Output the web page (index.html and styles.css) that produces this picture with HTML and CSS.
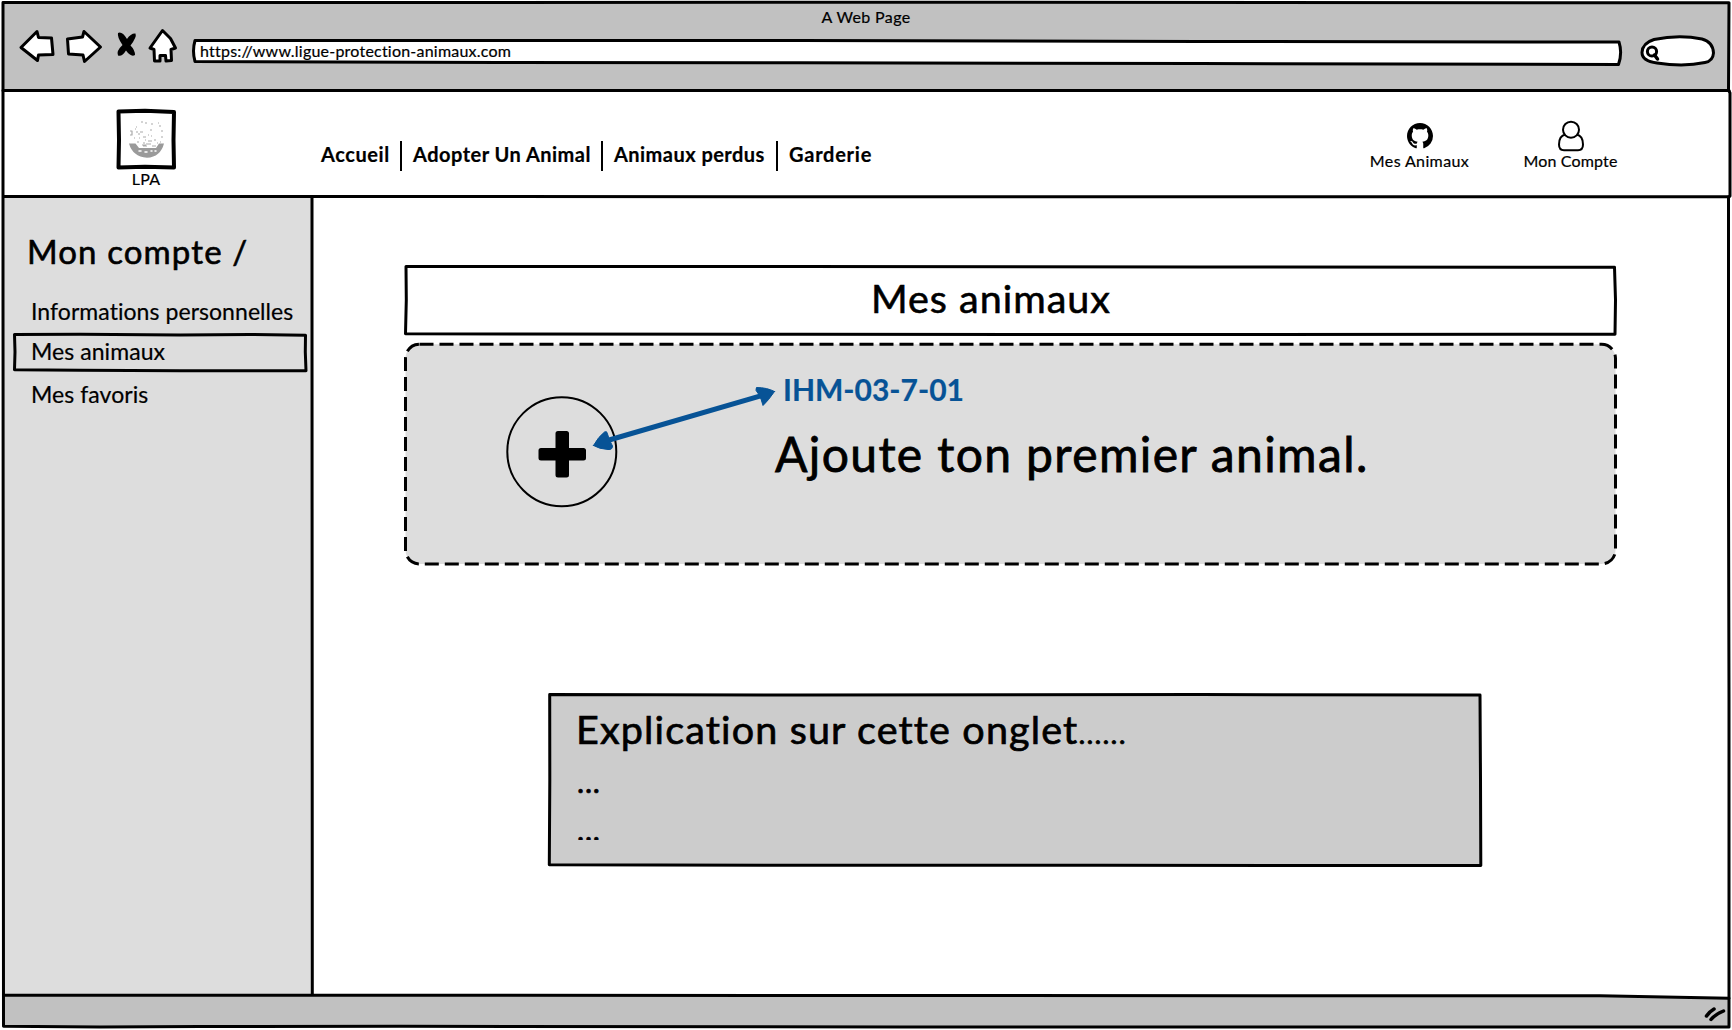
FILE: index.html
```html
<!DOCTYPE html>
<html lang="fr">
<head>
<meta charset="utf-8">
<title>Mes animaux - LPA</title>
<link rel="stylesheet" href="styles.css">
</head>
<body>
<div class="window">

  <div class="chrome">
    <div class="chrome-title">A Web Page</div>
    <div class="controls">
      <svg class="back" width="40" height="40" viewBox="18 27 40 40"><path d="M21 47.500 L37 31.500 L38.500 37.500 L51.500 38 L53 54.500 L38.500 55 L37.500 60.500 Z"/></svg>
      <svg class="forward" width="40" height="40" viewBox="64 27 40 40"><path d="M67.500 39 L82.500 37 L84 31.500 L100.500 47 L84.500 61.500 L83 55 L68.500 54 Z"/></svg>
      <svg class="stop" width="24" height="40" viewBox="115 27 24 40"><path class="solid" d="M119 33 Q123 31 128 39 Q132 33 136.500 33.500 Q138 37 131.500 45.500 Q136 50 136 55 Q132 57.500 127 50.500 Q123 57 119 55.500 Q117 51 123.500 45 Q118 37 119 33 Z"/></svg>
      <svg class="home" width="32" height="40" viewBox="147 27 32 40"><path d="M162.500 30.500 L150 48 L154 49.500 L154.500 61 L160 61 L160 55.500 L165.500 55.500 L166 61 L171.500 60.500 L171 49.500 L175.500 48 L170.500 38.500 Z"/></svg>
      <div class="address">
        <svg class="sketch" width="1432" height="30" viewBox="190 37 1432 30"><path class="paper" d="M196 40.500 L800 40.500 L1200 41.500 L1620 42 Q1623.500 53 1619.500 64.500 L1200 63.500 L800 62.800 L500 62.500 L196 61.500 Q193 51 196 40.500 Z"/></svg>
        <span>https://www.ligue-protection-animaux.com</span>
      </div>
      <svg class="search" width="80" height="40" viewBox="1639 27 80 40"><path d="M1655 39.500 Q1680 34.500 1703 39 Q1714 42 1714.500 53 Q1714 61 1706 62.500 Q1685 67 1658 63 Q1643 61 1643 52.500 Q1643.500 43 1655 39.500 Z"/><circle cx="1653" cy="51.500" r="4.600"/><path d="M1655.500 55 L1658.500 59" stroke-width="3.500"/></svg>
    </div>
  </div>

  <header class="site-header">
    <a class="brand">
      <svg width="64" height="64" viewBox="114 107 64 64">
        <path class="paper thick" d="M118.500 111.500 L145 110.800 L174 112 L173.500 140 L174 167.500 L145 166.800 L118.500 167.500 L119 140 Z"/>
        <path class="bowl" d="M129 143.500 L135.500 143.500 L139 148 L156 148 L159 143.500 L164 143.500 Q160.500 157 147 157.800 Q132.500 156.500 129 143.500 Z"/>
        <path class="specks" d="M141 122h2m2 1h2m4 1h2m5-1h1M136 127h1m-2 2h1m23-3h2M130 131h2v4h-2m6-3h2m2 0h3m-5 2h2m10-4h2m9 1h2M139 138h1m3-1h3m5-1h1m9 1h2m-3 5h1M134 138h1m2 4h2m6-2h1m-3 3h2m3-2h4m-6 3h5m-8 2h4M148 135h1m5 5h2m1 3h1M142 145h4m6 1h4"/>
        <path class="gaps" d="M139 151h2M145 152h2M151 151h1M155 151h1"/>
      </svg>
      <span>LPA</span>
    </a>
    <nav class="site-nav">
      <a class="n1">Accueil</a><a class="n2">Adopter Un Animal</a><a class="n3">Animaux perdus</a><a class="n4">Garderie</a>
    </nav>
    <div class="shortcuts">
      <a class="shortcut pets">
        <svg width="26" height="26" viewBox="0 0 16 16"><path class="solid" d="M8 0C3.580 0 0 3.580 0 8c0 3.540 2.290 6.530 5.470 7.590.4.070.55-.17.55-.38 0-.19-.01-.82-.01-1.490-2.010.37-2.530-.49-2.690-.94-.09-.23-.48-.94-.82-1.130-.28-.15-.68-.52-.01-.53.63-.01 1.080.58 1.230.82.72 1.210 1.870.87 2.330.66.07-.52.28-.87.51-1.070-1.780-.2-3.640-.89-3.640-3.950 0-.87.31-1.590.82-2.150-.08-.2-.36-1.020.08-2.120 0 0 .67-.21 2.200.82.64-.18 1.320-.27 2-.27s1.360.09 2 .27c1.530-1.040 2.200-.82 2.200-.82.44 1.100.16 1.920.08 2.120.51.56.82 1.270.82 2.150 0 3.070-1.870 3.750-3.650 3.950.29.25.54.73.54 1.480 0 1.070-.01 1.930-.01 2.200 0 .21.15.46.55.38A8.010 8.010 0 0 0 16 8c0-4.420-3.580-8-8-8z"/></svg>
        <span>Mes Animaux</span>
      </a>
      <a class="shortcut account">
        <svg width="28" height="32" viewBox="1557 120 28 32"><path class="thin" d="M1565.500 134.500 C1560.500 135.500 1559 140 1559 144.500 Q1559 150.200 1564 150.200 L1578 150.200 Q1583 150.200 1583 144.500 C1583 140 1581.500 135.500 1576.500 134.500"/><circle class="thin" cx="1571" cy="129.700" r="8"/></svg>
        <span>Mon Compte</span>
      </a>
    </div>
  </header>

  <div class="page">
    <aside class="sidebar">
      <h2>Mon compte /</h2>
      <a class="item">Informations personnelles</a>
      <a class="item current">
        <svg class="sketch" width="296" height="42" viewBox="12 332 296 42"><path d="M14.500 334.500 L80 334.200 L180 335 L250 334.500 L305.500 335.300 L305.300 352 L306 370.800 L180 370.800 L80 370.300 L14.500 369.800 L15 352 Z"/></svg>
        <span>Mes animaux</span>
      </a>
      <a class="item last">Mes favoris</a>
    </aside>

    <main class="content">
      <section class="heading">
        <svg class="sketch" width="1214" height="72" viewBox="404 265 1214 72"><path class="paper" d="M406 266.500 L800 266.600 L1200 266.900 L1614.500 267.300 L1615.500 300 L1615 334.200 L1200 334.500 L800 334.300 L405.500 333.800 L406.300 300 Z"/></svg>
        <h1>Mes animaux</h1>
      </section>

      <section class="add-pet">
        <svg class="sketch" width="1214" height="224" viewBox="404 343 1214 224"><rect class="dashed" x="405.500" y="344.300" width="1210" height="219.600" rx="14"/></svg>
        <svg class="plus" width="114" height="114" viewBox="505 395 114 114"><circle class="ring" cx="561.800" cy="451.700" r="54.500"/><path class="solid" d="M558 431h8.500q2.500 0 2.500 2.500V448h14.500q2.500 0 2.500 2.500v7.500q0 2.500-2.500 2.500H569v14.500q0 2.500-2.500 2.500H558q-2.500 0-2.500-2.500V460.500H541q-2.500 0-2.500-2.500v-7.500q0-2.500 2.500-2.500h14.500v-14.500q0-2.500 2.500-2.500z"/></svg>
        <div class="invite">
          <p class="ref">IHM-03-7-01</p>
          <p class="prompt">Ajoute ton premier animal.</p>
        </div>
        <svg class="arrow" width="188" height="64" viewBox="590 386 188 64"><path class="shaft" d="M604 441.500 L764 395"/><path class="head" d="M593.500 445.500 Q598.500 436.500 604.500 432 Q607 430.500 607.500 434 L609.500 440 L612.500 446 Q612.500 450 608 449.500 Q599 449 593.500 445.500 Z"/><path class="head" d="M774.500 391.500 Q767 387.500 756.500 387.500 Q754.500 390 758.500 394 L761 399 L763 405.500 Q768 401 774.500 391.500 Z"/></svg>
      </section>

      <section class="explain">
        <svg class="sketch" width="934" height="174" viewBox="548 693 934 174"><path class="fill" d="M549.700 694.500 L800 695 L1200 694.500 L1480 695 L1480.500 780 L1480.800 865.500 L1100 865.300 L800 865.300 L549.300 864.800 L549.800 780 Z"/></svg>
        <p>Explication sur cette onglet<span class="dots">......</span></p>
        <p class="more">...</p>
        <p class="more cut">...</p>
      </section>
    </main>
  </div>

  <svg class="frame" width="1732" height="1030" viewBox="0 0 1732 1030">
    <path class="footfill" d="M3 995.500 L1600 996 L1729 998.500 L1729 1027 L3 1027 Z"/>
    <path class="grip" d="M1706.500 1016 Q1709 1012 1714 1009M1711 1019.500 Q1715 1014.500 1723.500 1011"/>
    <path d="M3 2.500 L900 2.300 L1729 2.800 L1728.500 90 L1730 93 L1730 196 L1728.500 197 L1728.500 480 L1729 700 L1729 1027 L900 1027 L400 1026.300 L200 1026.500 L100 1027 L3.500 1026.200 L3 300 Z"/>
    <path d="M3 90.500 H1729M4 196.500 L900 196.700 L1729 196.800M312 198 L312 300 L312.300 995M4 995.200 L500 995.300 L1600 995.800 L1729 998.200"/>
  </svg>
</div>
</body>
</html>
```
FILE: styles.css
```css
* { box-sizing: border-box; }

body {
  margin: 0;
  background: #fff;
  color: #000;
  font-family: Lato, "Liberation Sans", sans-serif;
  font-size: 16px;
  font-variant-ligatures: none;
  -webkit-text-stroke: 0.2px currentColor;
}

h1, h2, p { margin: 0; font-weight: 400; }

svg {
  display: block;
  flex: none;
  fill: #fff;
  stroke: #000;
  stroke-width: 3px;
  stroke-linejoin: round;
  stroke-linecap: round;
  overflow: visible;
}

.solid { fill: #000; stroke: none; }

.window {
  position: relative;
  width: 1732px;
  height: 1030px;
  display: flex;
  flex-direction: column;
  overflow: hidden;
}

/* outlines that run across several regions, and the status bar */
.frame {
  position: absolute;
  inset: 0;
  fill: none;
  pointer-events: none;
}
.footfill { fill: #c1c1c1; stroke: none; }
.grip { stroke-width: 3.5px; }

/* hand-drawn outline behind a box's own content */
.sketch { position: absolute; top: 0; left: 0; fill: none; }
.sketch .paper { fill: #fff; }

/* browser chrome */
.chrome {
  height: 90px;
  margin: 0 3px;
  background: linear-gradient(#fff 2px, #c1c1c1 2px);
}
.chrome-title {
  height: 27px;
  padding-top: 7px;
  line-height: 20px;
  text-align: center;
  letter-spacing: 0.38px;
}
.controls {
  display: flex;
  height: 40px;
  padding-left: 15px;
}
.forward { margin-left: 6px; }
.stop { margin-left: 10px; }
.home { margin-left: 9px; }
.address {
  position: relative;
  width: 1432px;
  height: 30px;
  margin: 10px 0 0 10px;
  padding-left: 11px;
  line-height: 28px;
  letter-spacing: 0.22px;
}
.address span { position: relative; }
.search { margin-left: 17px; }

/* site header */
.site-header {
  display: flex;
  height: 107px;
  padding: 17px 86px 0 114px;
}
.brand {
  width: 64px;
  display: flex;
  flex-direction: column;
  align-items: center;
  line-height: 20px;
  letter-spacing: 0.24px;
}
.brand svg { margin-bottom: -2px; }
.thick { stroke-width: 4px; }
.bowl { fill: #9a9a9a; stroke: none; }
.specks { fill: none; stroke: #aaa; stroke-width: 1.2px; stroke-linecap: butt; }
.gaps { fill: none; stroke: #fff; stroke-width: 1.5px; }

.site-nav {
  display: flex;
  height: 30px;
  margin: 34px 0 0 143px;
  line-height: 26px;
  font-size: 20px;
  font-weight: 700;
}
.site-nav a + a { border-left: 2.5px solid #000; padding-left: 11px; }
.n1 { width: 79px; letter-spacing: 0.58px; }
.n2 { width: 201px; letter-spacing: 0.48px; }
.n3 { width: 175px; letter-spacing: 0.46px; }
.n4 { letter-spacing: 0.75px; }

.shortcuts { display: flex; margin-left: auto; }
.shortcut {
  width: 151px;
  display: flex;
  flex-direction: column;
  align-items: center;
  justify-content: flex-end;
  height: 64px;
  line-height: 20px;
  letter-spacing: 0.38px;
}
.pets svg { margin-bottom: 2px; }
.account { letter-spacing: 0.16px; }
.account svg { margin-bottom: -1px; }
.thin { fill: #fff; stroke-width: 2px; }

/* page body */
.page { display: flex; height: 798px; }

.sidebar {
  width: 313px;
  padding: 34px 0 0 26px;
  background: linear-gradient(90deg, #fff 3px, #ddd 3px);
}
.sidebar h2 {
  line-height: 40px;
  margin-bottom: 21px;
  padding-left: 1px;
  font-size: 33px;
  letter-spacing: 1.12px;
  -webkit-text-stroke-width: 0.6px;
}
.item {
  display: block;
  padding-left: 5px;
  line-height: 38px;
  font-size: 23px;
  letter-spacing: 0.06px;
  white-space: nowrap;
}
.current {
  position: relative;
  margin: 2px 0 5px -14px;
  padding-left: 19px;
}
.current span { position: relative; }

.content { flex: 1; padding: 68px 0 0 91px; }

.heading {
  position: relative;
  width: 1214px;
  height: 72px;
  padding-right: 40px;
  text-align: center;
}
.heading h1 {
  position: relative;
  line-height: 66px;
  font-size: 39.5px;
  letter-spacing: 1px;
  -webkit-text-stroke-width: 0.6px;
}

.add-pet {
  position: relative;
  display: flex;
  width: 1214px;
  height: 224px;
  margin-top: 6px;
  padding: 28px 0 0 371px;
}
.dashed {
  fill: #ddd;
  stroke-dasharray: 14 6;
  stroke-linecap: butt;
}
.plus { position: relative; margin: 24px 0 0 -270px; }
.ring { fill: none; stroke-width: 2px; }
.arrow { position: absolute; top: 43px; left: 186px; }
.shaft { fill: none; stroke: #075396; stroke-width: 5px; }
.head { fill: #075396; stroke: #075396; stroke-width: 1px; }
.invite { position: relative; margin-left: 156px; }
.ref {
  padding-left: 8px;
  line-height: 36px;
  font-size: 30px;
  font-weight: 700;
  color: #075396;
}
.prompt {
  margin-top: 18px;
  line-height: 58px;
  font-size: 48px;
  letter-spacing: 1.37px;
  -webkit-text-stroke-width: 0.8px;
}

.explain {
  position: relative;
  width: 934px;
  height: 174px;
  margin: 126px 0 0 144px;
  padding: 12px 0 0 28px;
}
.explain .fill { fill: #ccc; }
.explain p {
  position: relative;
  line-height: 48px;
  font-size: 39.5px;
  letter-spacing: 1.15px;
  -webkit-text-stroke-width: 0.7px;
}
.explain .dots { font-size: 29px; letter-spacing: 1.2px; }
.explain .more { padding-left: 1px; font-size: 30px; letter-spacing: 0.8px; }
/* the last line only peeks out of the text area */
.explain .cut { height: 35px; overflow: hidden; }
```
